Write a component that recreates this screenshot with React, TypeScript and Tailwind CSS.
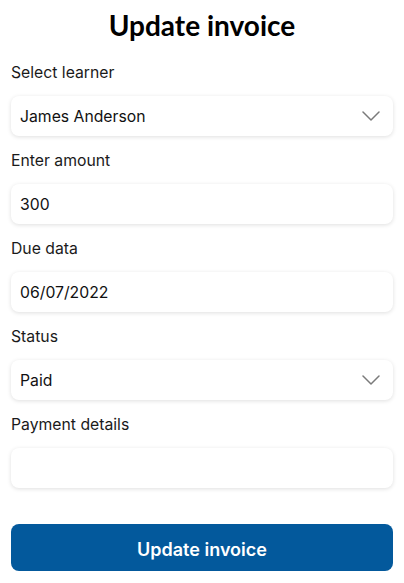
import { ReactNode } from "react";

function Chevron() {
  return (
    <svg width="18" height="10" viewBox="0 0 18 10" fill="none" className="shrink-0">
      <path d="M1 1l8 8 8-8" stroke="#7a7a7a" strokeWidth="1.5" strokeLinecap="round" strokeLinejoin="round" />
    </svg>
  );
}

function Field({ label, children }: { label: string; children: ReactNode }) {
  return (
    <div className="pt-[15px]">
      <div className="mb-[13px] h-5 text-[15.75px] leading-5 text-[#1a1a1a]">{label}</div>
      {children}
    </div>
  );
}

function Box({ value, select }: { value?: string; select?: boolean }) {
  return (
    <div className="flex h-10 items-center justify-between rounded-lg bg-white pl-[9px] pr-[13px] text-[15.75px] text-[#111] shadow-[0_1px_4px_rgba(0,0,0,0.13)]">
      <span className="pt-[2px]">{value}</span>
      {select && <Chevron />}
    </div>
  );
}

export default function App() {
  return (
    <div className="min-h-screen bg-white px-[11px] font-['Inter',sans-serif]">
      <h1 className="pt-[8px] pb-[6px] text-center font-['Lato',sans-serif] text-[28px] font-bold leading-[34px] text-black">
        Update invoice
      </h1>
      <Field label="Select learner">
        <Box value="James Anderson" select />
      </Field>
      <Field label="Enter amount">
        <Box value="300" />
      </Field>
      <Field label="Due data">
        <Box value="06/07/2022" />
      </Field>
      <Field label="Status">
        <Box value="Paid" select />
      </Field>
      <Field label="Payment details">
        <Box />
      </Field>
      <button className="mt-9 flex h-[47px] w-full items-center justify-center rounded-lg bg-[#03599c] pt-[3px] text-[18px] font-semibold text-white">
        Update invoice
      </button>
    </div>
  );
}
